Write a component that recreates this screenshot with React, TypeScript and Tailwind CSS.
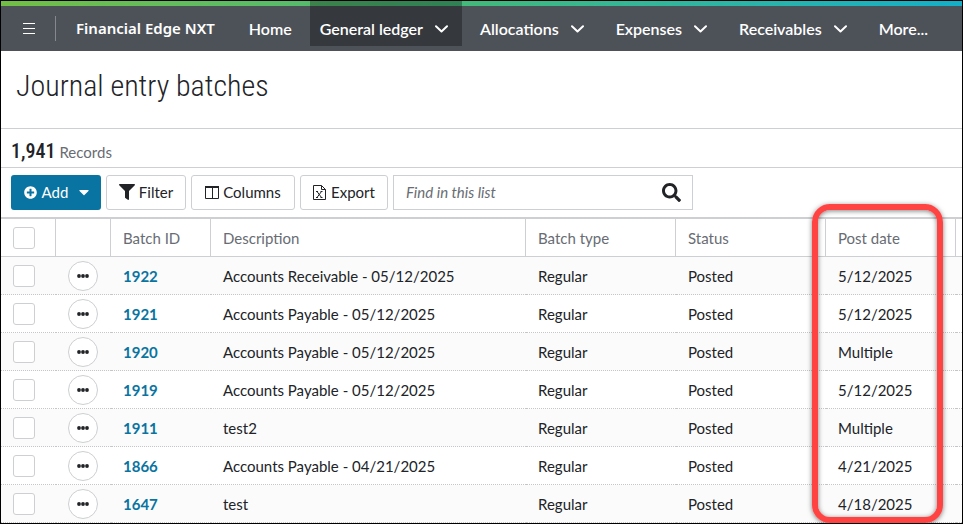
import { FaCaretDown, FaFilter, FaPlusCircle, FaSearch } from "react-icons/fa"

interface Batch {
  id: string
  description: string
  type: string
  status: string
  postDate: string
}

interface NavItem {
  label: string
  menu?: boolean
  active?: boolean
}

const navItems: NavItem[] = [
  { label: "Home" },
  { label: "General ledger", menu: true, active: true },
  { label: "Allocations", menu: true },
  { label: "Expenses", menu: true },
  { label: "Receivables", menu: true },
  { label: "More..." },
]

const batches: Batch[] = [
  { id: "1922", description: "Accounts Receivable - 05/12/2025", type: "Regular", status: "Posted", postDate: "5/12/2025" },
  { id: "1921", description: "Accounts Payable - 05/12/2025", type: "Regular", status: "Posted", postDate: "5/12/2025" },
  { id: "1920", description: "Accounts Payable - 05/12/2025", type: "Regular", status: "Posted", postDate: "Multiple" },
  { id: "1919", description: "Accounts Payable - 05/12/2025", type: "Regular", status: "Posted", postDate: "5/12/2025" },
  { id: "1911", description: "test2", type: "Regular", status: "Posted", postDate: "Multiple" },
  { id: "1866", description: "Accounts Payable - 04/21/2025", type: "Regular", status: "Posted", postDate: "4/21/2025" },
  { id: "1647", description: "test", type: "Regular", status: "Posted", postDate: "4/18/2025" },
]

const checkboxClass =
  "block size-[22px] appearance-none rounded-[3px] border border-[#cdcfd2] bg-white checked:bg-[#0974a1]"
const buttonClass =
  "flex h-[35px] items-center rounded-[3px] border border-[#cdcfd2] bg-white pb-px text-[#212327] hover:bg-gray-50"

function Chevron() {
  return (
    <svg className="h-2 w-[13px]" viewBox="0 0 13 8" fill="none" stroke="white" strokeWidth="2" aria-hidden="true">
      <path d="M1 1.2 6.5 6.4 12 1.2" strokeLinecap="round" strokeLinejoin="round" />
    </svg>
  )
}

function NavBar() {
  return (
    <header className="flex h-[50px] flex-col bg-[#4d5259] text-white">
      <div className="h-[5px] shrink-0 bg-linear-to-r from-[#72bf44] via-[#41b97c] to-[#13afc8]" />
      <div className="-mt-[5px] flex h-[50px] items-start">
        <button className="mt-[5px] flex h-[45px] w-[54px] items-center justify-center pl-[2px]" aria-label="Open menu">
          <svg className="h-3 w-3" viewBox="0 0 12 12" fill="white" aria-hidden="true">
            <path d="M0 0h12v1H0zM0 5h12v1H0zM0 10h12v1H0z" />
          </svg>
        </button>
        <div className="mt-[15px] h-[25px] w-px bg-[#85898e]" />
        <a href="#" className="mt-[5px] mr-6 ml-5 flex h-[45px] items-center pb-[2px] font-['Noto_Sans',sans-serif] text-[15px] font-semibold whitespace-nowrap">
          Financial Edge NXT
        </a>
        <nav className="flex gap-2 text-base font-semibold">
          {navItems.map((item) => (
            <a
              key={item.label}
              href="#"
              className={`flex h-[45px] items-center gap-3 whitespace-nowrap pt-[11px] pl-[10px] ${
                item.menu ? "pr-[14px]" : "pr-[10px]"
              } ${item.active ? "bg-black/30" : ""}`}
            >
              {item.label}
              {item.menu && <Chevron />}
            </a>
          ))}
        </nav>
      </div>
    </header>
  )
}

function Toolbar() {
  return (
    <div className="flex items-center gap-[5px] px-[10px] py-[7px]">
      <button className="flex h-[35px] w-[90px] items-center justify-center rounded-[3px] bg-[#0974a1] pb-px pl-1 text-white">
        <FaPlusCircle className="mr-[5px] size-[13px]" />
        Add
        <FaCaretDown className="ml-2 size-4" />
      </button>
      <button className={`${buttonClass} w-20 justify-center gap-1`}>
        <FaFilter className="size-4" />
        Filter
      </button>
      <button className={`${buttonClass} w-[104px] justify-center gap-1`}>
        <svg className="h-[13px] w-[14px]" viewBox="0 0 14 13" fill="none" stroke="#212327" aria-hidden="true">
          <path d="M.5 1v11.5h13V1M7.5 2v10" />
          <path d="M0 1h14" strokeWidth="2" />
        </svg>
        Columns
      </button>
      <button className={`${buttonClass} w-[88px] justify-center gap-[5px]`}>
        <svg className="h-[15px] w-[13px]" viewBox="0 0 13 15" fill="none" stroke="#212327" aria-hidden="true">
          <path d="M.5.5h8l4 4v10H.5zM8.5.5v4h4" />
          <path d="M4 6.5l4.5 6M8.5 6.5 4 12.5M3 6.5h2M7.5 6.5h2M3 12.5h2M7.5 12.5h2" />
        </svg>
        Export
      </button>
      <form className="flex h-[35px] w-[300px] items-center border border-[#cdcfd2]" onSubmit={(e) => e.preventDefault()}>
        <input
          type="search"
          aria-label="Find in this list"
          placeholder="Find in this list"
          className="h-full min-w-0 flex-1 px-3 pb-px outline-none placeholder:text-[#686c73] placeholder:italic"
        />
        <button className="flex h-full w-[42px] items-center justify-center text-[#212327]" aria-label="Search">
          <FaSearch className="size-[19px]" />
        </button>
      </form>
    </div>
  )
}

function BatchTable() {
  return (
    <table className="w-full table-fixed border-separate border-spacing-0 text-left">
      <colgroup>
        <col className="w-[55px]" />
        <col className="w-[55px]" />
        <col className="w-[100px]" />
        <col />
        <col className="w-[150px]" />
        <col className="w-[150px]" />
        <col className="w-[130px]" />
        <col className="w-[6px]" />
      </colgroup>
      <thead>
        <tr className="h-[38px] text-[#686c73] *:border-b *:border-[#cdcfd2] *:p-0 *:font-normal *:not-last:border-r">
          <th>
            <input type="checkbox" aria-label="Select all batches" className={`${checkboxClass} ml-3`} />
          </th>
          <th />
          <th>
            <span className="pl-3">Batch ID</span>
          </th>
          <th>
            <span className="pl-3">Description</span>
          </th>
          <th>
            <span className="pl-3">Batch type</span>
          </th>
          <th>
            <span className="pl-3">Status</span>
          </th>
          <th>
            <span className="pl-3">Post date</span>
          </th>
          <th />
        </tr>
      </thead>
      <tbody>
        {batches.map((batch) => (
          <tr
            key={batch.id}
            className="h-[38px] odd:bg-[#fbfbfb] *:border-b *:border-dotted *:border-[#c4c6c9] *:p-0 *:pl-3"
          >
            <td>
              <input type="checkbox" aria-label={`Select batch ${batch.id}`} className={checkboxClass} />
            </td>
            <td>
              <button
                className="flex size-[30px] items-center justify-center rounded-full border border-[#cdcfd2] bg-white"
                aria-label={`Actions for batch ${batch.id}`}
              >
                <svg className="h-1 w-3" viewBox="0 0 12 4" fill="#212327" aria-hidden="true">
                  <circle cx="2" cy="2" r="1.9" />
                  <circle cx="6" cy="2" r="1.9" />
                  <circle cx="10" cy="2" r="1.9" />
                </svg>
              </button>
            </td>
            <td>
              <a href="#" className="font-bold text-[#0974a1]">
                {batch.id}
              </a>
            </td>
            <td>{batch.description}</td>
            <td>{batch.type}</td>
            <td>{batch.status}</td>
            <td>{batch.postDate}</td>
            <td />
          </tr>
        ))}
      </tbody>
    </table>
  )
}

export default function App() {
  return (
    <div className="overflow-hidden border border-black bg-white font-['Lato',sans-serif] text-[15px] leading-5 text-[#212327]">
      <NavBar />
      <main>
        <h1 className="px-[15px] pt-[15px] pb-[22px] font-['Roboto_Condensed','Open_Sans_Condensed','Noto_Sans_Condensed','Lato',sans-serif] text-[30px] leading-10 font-light">
          Journal entry batches
        </h1>
        <section aria-label="Batches">
          <p className="flex h-10 items-baseline gap-1 border-y border-[#cdcfd2] px-[10px] pt-3 text-[#686c73]">
            <span className="font-['Roboto_Condensed','Open_Sans_Condensed','Noto_Sans_Condensed','Lato',sans-serif] text-[20px] font-medium text-[#212327]">
              1,941
            </span>
            Records
          </p>
          <Toolbar />
          <div className="relative border-t-2 border-[#cdcfd2]">
            <BatchTable />
            {/* callout around the post date column */}
            <div className="pointer-events-none absolute -top-[15px] right-[19px] bottom-0 w-[131px] rounded-[18px] border-[6px] border-[#ff4343] shadow-[0_1px_5px_rgba(0,0,0,0.5),inset_0_1px_5px_rgba(0,0,0,0.5)]" />
          </div>
        </section>
      </main>
    </div>
  )
}
